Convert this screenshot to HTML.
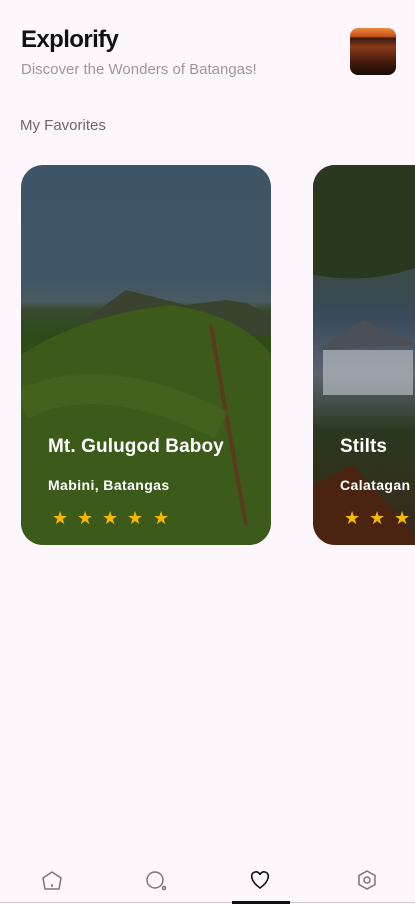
<!DOCTYPE html>
<html><head><meta charset="utf-8"><style>
*{margin:0;padding:0;box-sizing:border-box}
body{width:415px;height:904px;background:#fdf7fd;font-family:"Liberation Sans",sans-serif;position:relative;overflow:hidden}
.t{position:absolute;left:21px;top:26px;font-size:24px;font-weight:700;color:#111;letter-spacing:-0.6px}
.s{position:absolute;left:21px;top:61px;font-size:15px;color:#9a979c}
.av{position:absolute;left:350px;top:28px;width:46px;height:47px;border-radius:8px;background:linear-gradient(#e88a3a 0%,#c8501c 18%,#3a1a10 22%,#8a3a18 40%,#40180c 75%,#1a0c08 100%)}
.f{position:absolute;left:20px;top:117px;font-size:15px;color:#6a676c}
.card{position:absolute;top:165px;width:250px;height:380px;border-radius:22px;overflow:hidden}
.c1{left:21px;background:
linear-gradient(180deg,#3d5566 0%,#3e5666 30%,#4a5a60 36%,#3a4a30 38%,#2d4a18 45%,#3a5a1a 60%,#3d5a1a 80%,#2e3e12 100%)}
.c2{left:313px;background:linear-gradient(180deg,#2a3a20 0%,#3a4a40 25%,#3a4a5a 40%,#5a6470 55%,#2a3820 70%,#3a2818 100%)}
.h{position:absolute;color:#fff;font-weight:700;white-space:nowrap}
.n{font-size:19px;top:271px;left:27px;letter-spacing:0.1px}
.l{font-size:14px;top:312px;left:27px;letter-spacing:0.4px}
.st{position:absolute;top:343px;color:#f7b900;font-size:18px}
.nav{position:absolute;top:862px;left:0;width:415px}
.bar{position:absolute;top:901px;left:232px;width:58px;height:3px;background:#111}
.line{position:absolute;top:902px;left:0;width:415px;height:1px;background:#ccc}
</style></head><body>
<div class="t">Explorify</div>
<div class="s">Discover the Wonders of Batangas!</div>
<div class="av"></div>
<div class="f">My Favorites</div>
<div class="card c1">
<svg width="250" height="380" style="position:absolute;left:0;top:0"><path d="M60 158 L105 125 L125 130 L165 140 L205 135 L225 138 L250 150 L250 170 L60 170Z" fill="#3a4230"/><path d="M0 190 Q60 150 150 140 Q220 150 250 190 L250 380 L0 380Z" fill="#3c5a1a"/><path d="M190 160 Q205 250 225 360" stroke="#5a3a20" stroke-width="4" fill="none"/><path d="M0 240 Q80 200 200 260" stroke="#4a6a22" stroke-width="30" fill="none" opacity=".5"/></svg>
<div class="h n">Mt. Gulugod Baboy</div>
<div class="h l">Mabini, Batangas</div>
<div class="st" style="left:31px">★</div><div class="st" style="left:56px">★</div><div class="st" style="left:81px">★</div><div class="st" style="left:106px">★</div><div class="st" style="left:132px">★</div>
</div>
<div class="card c2">
<svg width="250" height="380" style="position:absolute;left:0;top:0"><path d="M0 0 L110 0 L110 100 Q60 120 0 110Z" fill="#2a3820"/><path d="M5 185 L50 155 L105 180 Z" fill="#4a5058"/><rect x="10" y="185" width="90" height="45" fill="#c8ccd0" opacity=".6"/><path d="M0 320 L40 300 L110 380 L0 380Z" fill="#4a2410"/></svg>
<div class="h n">Stilts</div>
<div class="h l">Calatagan</div>
<div class="st" style="left:31px">★</div><div class="st" style="left:56px">★</div><div class="st" style="left:81px">★</div>
</div>
<svg class="nav" width="415" height="36" viewBox="0 0 415 36">
<g fill="none" stroke="#777" stroke-width="1.5">
<path d="M52 10 L61 16 L59 27 L45 27 L43 16 Z" stroke-linejoin="round"/><path d="M52 22 V25"/>
<circle cx="155" cy="18" r="8"/><circle cx="164" cy="26" r="1.5"/>
<circle cx="367" cy="18" r="3"/><path d="M367 9 L375 13.5 L375 22.5 L367 27 L359 22.5 L359 13.5 Z"/>
</g>
<path d="M260 26 C250 19 250 11 255 10 C258 9 260 12 260 13 C260 12 262 9 265 10 C270 11 270 19 260 26Z" fill="none" stroke="#111" stroke-width="1.6"/>
</svg>
<div class="line"></div>
<div class="bar"></div>
</body></html>
